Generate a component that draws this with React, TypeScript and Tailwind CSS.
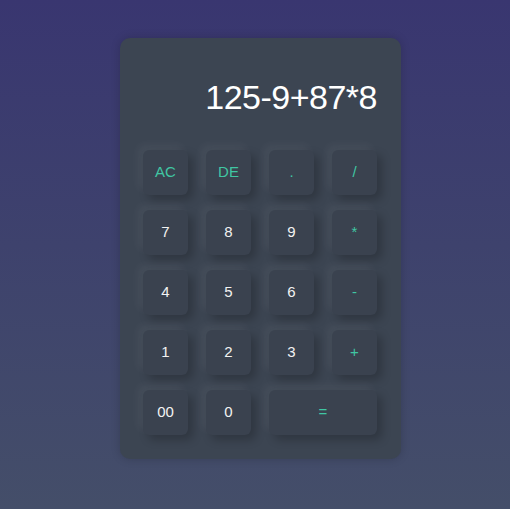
const keys: { label: string; accent?: boolean; wide?: boolean }[] = [
  { label: "AC", accent: true },
  { label: "DE", accent: true },
  { label: ".", accent: true },
  { label: "/", accent: true },
  { label: "7" },
  { label: "8" },
  { label: "9" },
  { label: "*", accent: true },
  { label: "4" },
  { label: "5" },
  { label: "6" },
  { label: "-", accent: true },
  { label: "1" },
  { label: "2" },
  { label: "3" },
  { label: "+", accent: true },
  { label: "00" },
  { label: "0" },
  { label: "=", accent: true, wide: true },
];

export default function App() {
  return (
    <div className="flex min-h-[509px] bg-gradient-to-b from-[#393670] to-[#444e69] pl-[120px] pt-[38px] font-['Liberation_Sans',Arial,sans-serif]">
      <div className="h-fit w-[281px] rounded-[10px] bg-[#3c4552] pb-6 pl-[23px] pr-6 pt-[42px] shadow-[0_0_10px_rgba(0,0,0,0.18)]">
        {/* display */}
        <div className="mb-[36px] h-[34px] text-right text-[34px] leading-[34px] tracking-[-0.5px] text-white">
          125-9+87*8
        </div>

        <div className="grid grid-cols-[repeat(4,45px)] gap-x-[18px] gap-y-[15px]">
          {keys.map((k) => (
            <button
              key={k.label}
              className={`flex h-[45px] items-center justify-center rounded-[6px] bg-[#3a424f] text-[15px] shadow-[-5px_-5px_10px_rgba(255,255,255,0.05),5px_5px_10px_rgba(0,0,0,0.22)] ${
                k.wide ? "col-span-2" : ""
              } ${k.accent ? "text-[#40c6a3]" : "text-[#f2f2f2]"}`}
            >
              {k.label}
            </button>
          ))}
        </div>
      </div>
    </div>
  );
}
